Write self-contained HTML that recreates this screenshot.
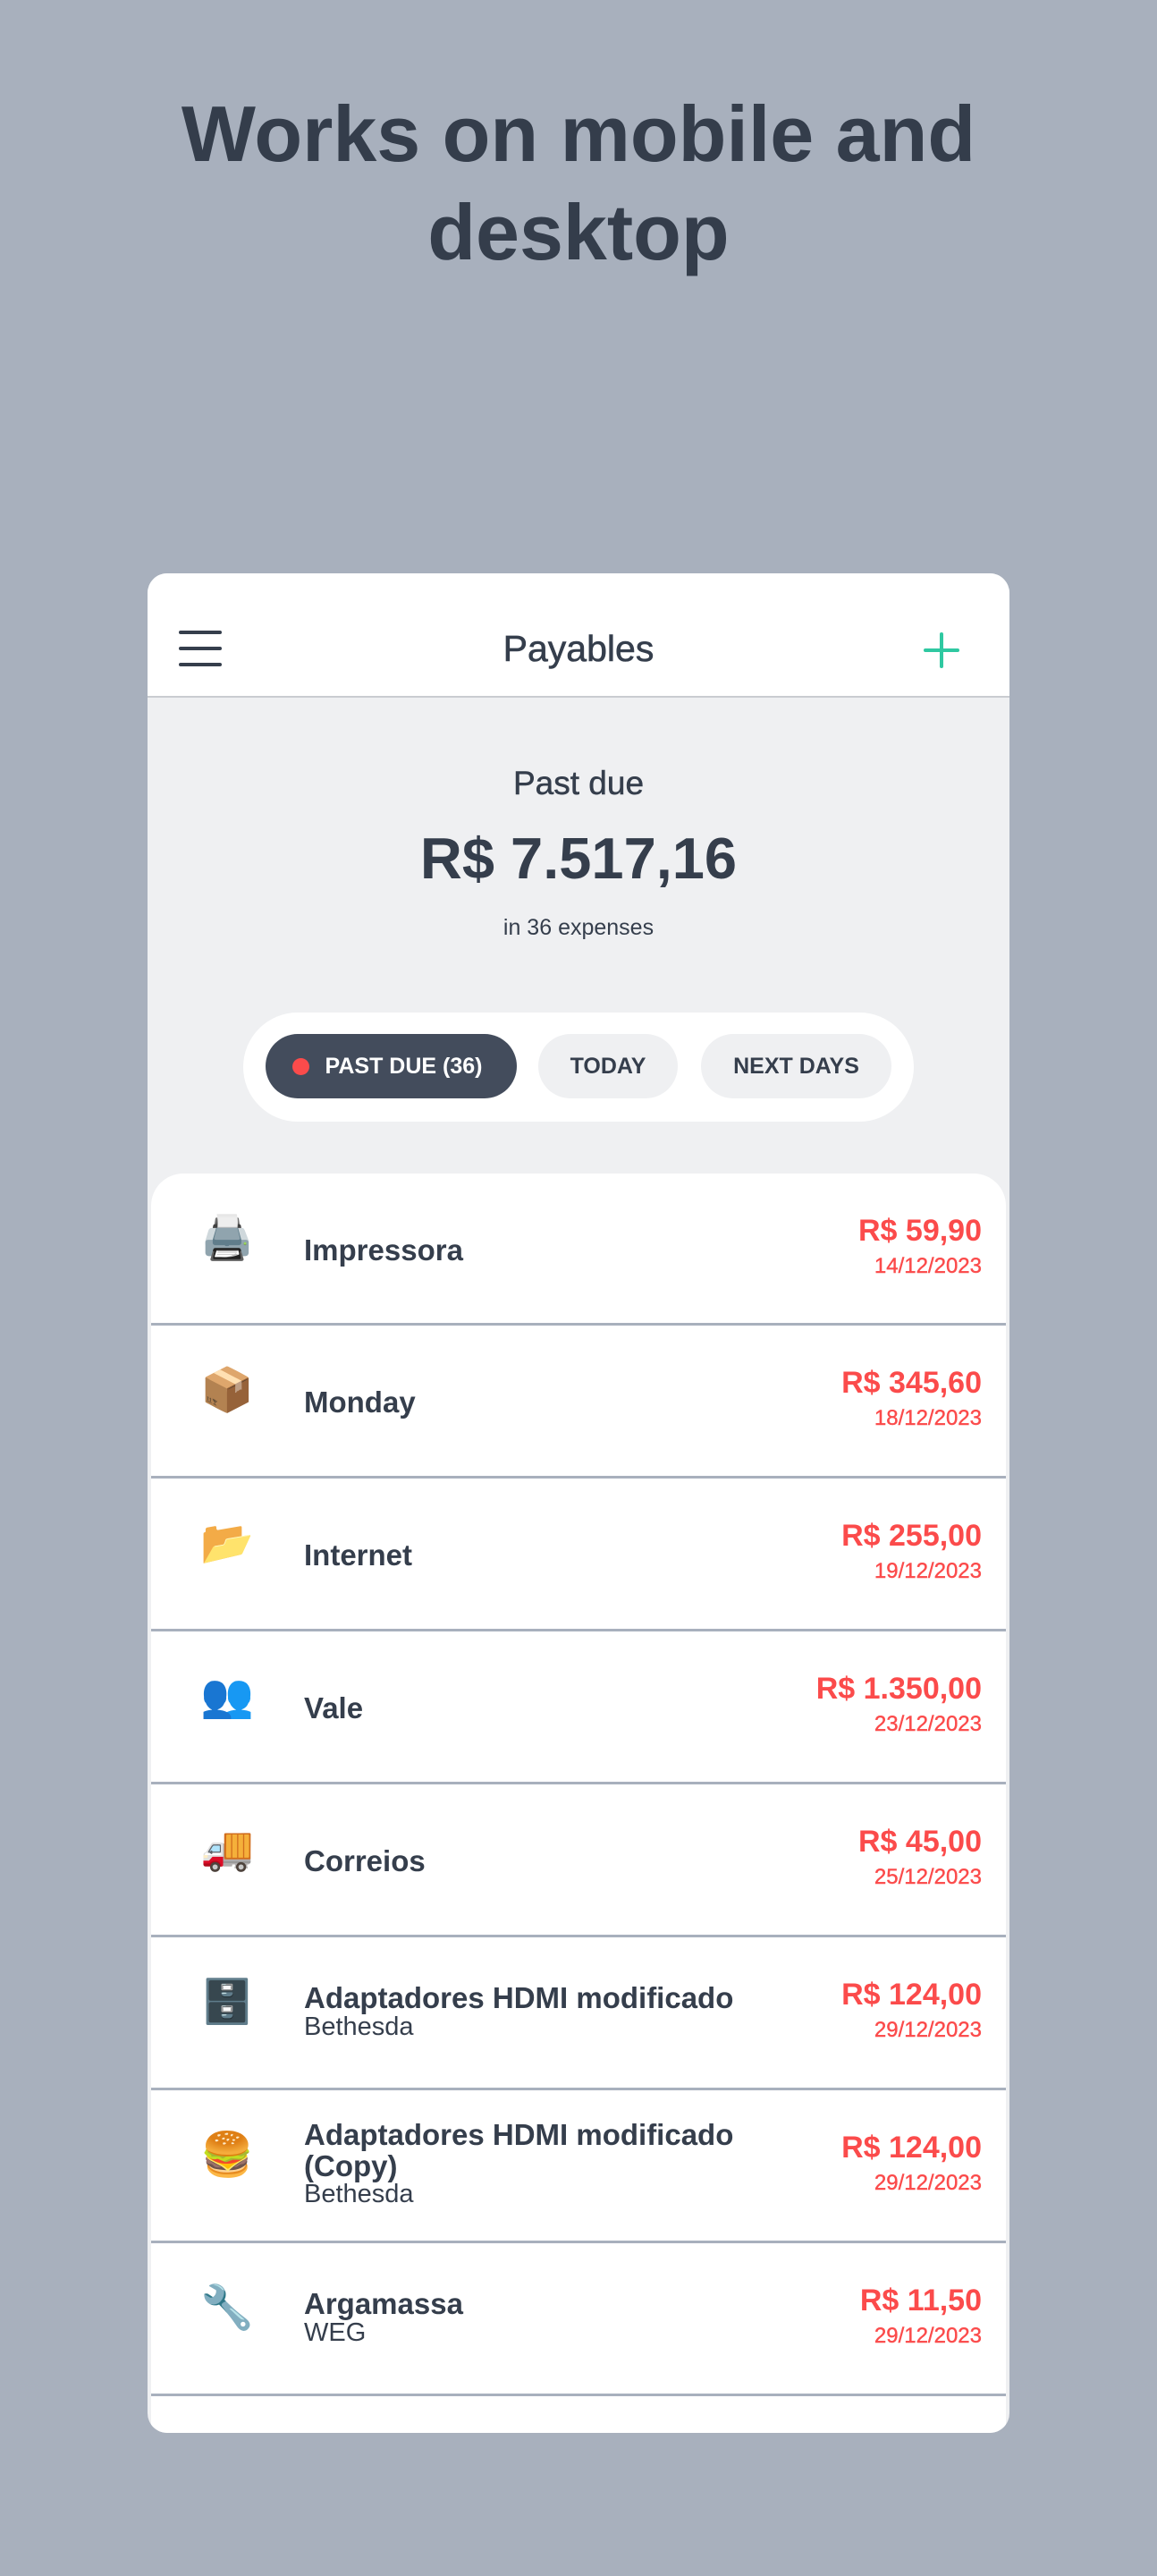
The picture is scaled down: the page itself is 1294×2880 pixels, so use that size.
<!DOCTYPE html>
<html><head><meta charset="utf-8"><style>
*{margin:0;padding:0;box-sizing:border-box}
body{width:1294px;height:2880px;background:#a8b0bd;font-family:"Liberation Sans",sans-serif;color:#353e4c;position:relative;overflow:hidden}
h1{position:absolute;top:95px;left:0;width:1294px;text-align:center;font-size:88px;line-height:110px;font-weight:bold;color:#343d4b}
.card{position:absolute;left:165px;top:641px;width:964px;height:2079px;background:#eff0f2;border-radius:22px;overflow:hidden}
.hdr{position:absolute;left:0;top:0;width:964px;height:139px;background:#fff;border-bottom:2px solid #c9ccd1}
.ham{position:absolute;left:35px;width:48px;height:4px;background:#353e4c;border-radius:2px}
.title{position:absolute;top:62px;width:964px;text-align:center;font-size:41px;line-height:44px;-webkit-text-stroke:0.6px #353e4c}
.plus1{position:absolute;left:868px;top:84px;width:40px;height:4px;background:#2fc8a1;border-radius:2px}
.plus2{position:absolute;left:886px;top:66px;width:4px;height:40px;background:#2fc8a1;border-radius:2px}
.c{position:absolute;left:0;width:964px;text-align:center}
.tabs{position:absolute;left:107px;top:491px;width:750px;height:122px;background:#fff;border-radius:61px}
.pill{position:absolute;top:24px;height:72px;border-radius:36px;background:#eff0f2;font-size:25px;font-weight:bold;line-height:72px;text-align:center;color:#353e4c}
.list{position:absolute;left:4px;top:671px;width:956px;height:1420px;background:#fff;border-radius:36px 36px 0 0}
.row{position:absolute;left:0;width:956px;height:171px;border-bottom:3px solid #a8b0bd}
.em{position:absolute;left:55px;font-size:48px;line-height:56px}
.nm{position:absolute;left:171px;font-size:33px;line-height:36px;font-weight:bold;color:#353e4c}
.sub{font-weight:normal;font-size:29px;line-height:28px;display:block}
.amt{position:absolute;right:27px;top:44px;font-size:34px;font-weight:bold;color:#fb4b4b;text-align:right;line-height:40px}
.dt{position:absolute;right:27px;top:90px;font-size:24px;color:#fb4b4b;line-height:28px;-webkit-text-stroke:0.4px #fb4b4b}
</style></head><body>
<h1>Works on mobile and<br>desktop</h1>
<div class="card">
 <div class="hdr">
  <div class="ham" style="top:64px"></div><div class="ham" style="top:82px"></div><div class="ham" style="top:100px"></div>
  <div class="title">Payables</div>
  <div class="plus1"></div><div class="plus2"></div>
 </div>
 <div class="c" style="top:213px;font-size:37px;line-height:44px;-webkit-text-stroke:0.5px #353e4c">Past due</div>
 <div class="c" style="top:279px;font-size:65px;font-weight:bold;line-height:80px">R$ 7.517,16</div>
 <div class="c" style="top:380px;font-size:25px;line-height:32px">in 36 expenses</div>
 <div class="tabs">
  <div class="pill" style="left:25px;width:281px;background:#434c5c;color:#fff;padding-left:28px">PAST DUE (36)<span style="position:absolute;left:30px;top:27px;width:19px;height:19px;border-radius:50%;background:#fb4b4b"></span></div>
  <div class="pill" style="left:330px;width:156px">TODAY</div>
  <div class="pill" style="left:512px;width:213px">NEXT DAYS</div>
 </div>
 <div class="list">
  <div class="row" style="top:0;height:170px"><div class="em" style="top:45px">🖨️</div><div class="nm" style="top:68px">Impressora</div><div class="amt">R$ 59,90</div><div class="dt">14/12/2023</div></div>
  <div class="row" style="top:170px"><div class="em" style="top:45px">📦</div><div class="nm" style="top:68px">Monday</div><div class="amt">R$ 345,60</div><div class="dt">18/12/2023</div></div>
  <div class="row" style="top:341px"><div class="em" style="top:45px">📂</div><div class="nm" style="top:68px">Internet</div><div class="amt">R$ 255,00</div><div class="dt">19/12/2023</div></div>
  <div class="row" style="top:512px"><div class="em" style="top:45px">👥</div><div class="nm" style="top:68px">Vale</div><div class="amt">R$ 1.350,00</div><div class="dt">23/12/2023</div></div>
  <div class="row" style="top:683px"><div class="em" style="top:45px">🚚</div><div class="nm" style="top:68px">Correios</div><div class="amt">R$ 45,00</div><div class="dt">25/12/2023</div></div>
  <div class="row" style="top:854px"><div class="em" style="top:45px">🗄️</div><div class="nm" style="top:50px">Adaptadores HDMI modificado<span class="sub">Bethesda</span></div><div class="amt">R$ 124,00</div><div class="dt">29/12/2023</div></div>
  <div class="row" style="top:1025px"><div class="em" style="top:45px">🍔</div><div class="nm" style="top:32px;line-height:35px">Adaptadores HDMI modificado<br>(Copy)<span class="sub">Bethesda</span></div><div class="amt">R$ 124,00</div><div class="dt">29/12/2023</div></div>
  <div class="row" style="top:1196px"><div class="em" style="top:45px">🔧</div><div class="nm" style="top:50px">Argamassa<span class="sub">WEG</span></div><div class="amt">R$ 11,50</div><div class="dt">29/12/2023</div></div>
 </div>
</div>
</body></html>
